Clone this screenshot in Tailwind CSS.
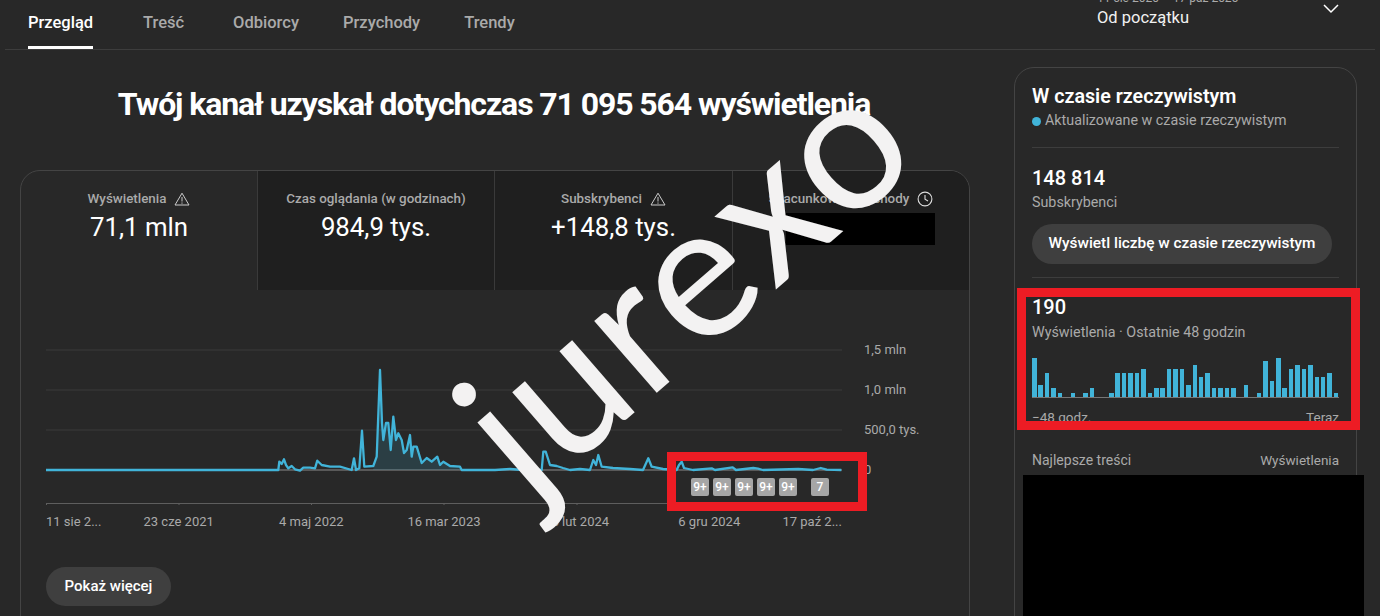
<!DOCTYPE html>
<html lang="pl">
<head>
  <meta charset="UTF-8" />
  <title>Przegląd kanału</title>
  <script src="https://cdn.jsdelivr.net/npm/@tailwindcss/browser@4"></script>
</head>
<body class="bg-[#282828] font-['Roboto',sans-serif] text-white overflow-hidden">
<div class="relative w-[1380px] h-[616px] overflow-hidden">

  <!-- Top tabs -->
  <header class="mx-[5px] h-[50px] border-b border-[#3d3d3d] flex items-end justify-between overflow-hidden">
    <nav class="flex pl-[23px] text-[16.500px] font-medium text-[#aaaaaa]">
      <a class="h-[49px] w-[65px] flex flex-col text-white"><span class="h-[46px] leading-[45px] whitespace-nowrap">Przegląd</span><span class="h-[3px] bg-white"></span></a>
      <a class="h-[49px] ml-[50px] leading-[45px]">Treść</a>
      <a class="h-[49px] ml-[49px] leading-[45px]">Odbiorcy</a>
      <a class="h-[49px] ml-[44px] leading-[45px]">Przychody</a>
      <a class="h-[49px] ml-[44px] leading-[45px]">Trendy</a>
    </nav>
    <div class="flex items-start w-[278px] h-[49px] relative">
      <div class="-mt-[10px]">
        <div class="text-[12px] leading-[16px] text-[#aaaaaa]">11 sie 2020 – 17 paź 2025</div>
        <div class="text-[16.500px] leading-[20px] mt-[2px] text-[#f1f1f1]">Od początku</div>
      </div>
      <svg class="absolute left-[226px] top-[3px] w-[16px] h-[12px]" viewBox="0 0 16 12" fill="none" stroke="#ffffff" stroke-width="1.5"><path d="M1 2l7 7 7-7" /></svg>
    </div>
  </header>

  <div class="flex">
    <!-- Left column -->
    <main class="w-[950px] ml-[20px] shrink-0">
      <h1 class="h-[120px] pt-[34px] pr-[2px] text-center text-[32px] leading-[40px] font-bold tracking-[-1.1px]">Twój kanał uzyskał dotychczas 71 095 564 wyświetlenia</h1>

      <section class="h-[500px] rounded-t-[20px] border border-[#444444] overflow-hidden">
        <!-- Metric tabs -->
        <div class="flex h-[119px]">
          <div class="w-[236px] pt-[20px] text-center">
            <div class="flex items-center justify-center gap-[8px] text-[13.400px] leading-[16px] font-medium text-[#aaaaaa]">Wyświetlenia
              <svg class="w-[16px] h-[14px]" viewBox="0 0 16 14" fill="none" stroke="#cccccc" stroke-width="1"><path d="M8 1.2L15 13H1z M8 5v4.5 M8 10.5v1.2" /></svg>
            </div>
            <div class="text-[25.800px] leading-[32px] mt-[4px]">71,1 mln</div>
          </div>
          <div class="w-[237px] pt-[20px] text-center bg-[#1f1f1f] border-l border-[#3a3a3a]">
            <div class="text-[13.400px] leading-[16px] font-medium text-[#aaaaaa]">Czas oglądania (w godzinach)</div>
            <div class="text-[25.800px] leading-[32px] mt-[4px]">984,9 tys.</div>
          </div>
          <div class="w-[238px] pt-[20px] text-center bg-[#1f1f1f] border-l border-[#3a3a3a]">
            <div class="flex items-center justify-center gap-[8px] text-[13.400px] leading-[16px] font-medium text-[#aaaaaa]">Subskrybenci
              <svg class="w-[16px] h-[14px]" viewBox="0 0 16 14" fill="none" stroke="#cccccc" stroke-width="1"><path d="M8 1.2L15 13H1z M8 5v4.5 M8 10.5v1.2" /></svg>
            </div>
            <div class="text-[25.800px] leading-[32px] mt-[4px]">+148,8 tys.</div>
          </div>
          <div class="flex-1 pt-[20px] bg-[#1f1f1f] border-l border-[#3a3a3a]">
            <div class="flex items-center justify-center gap-[8px] text-[13.400px] leading-[16px] font-medium text-[#aaaaaa]">Szacunkowe przychody
              <svg class="w-[16px] h-[16px]" viewBox="0 0 16 16" fill="none" stroke="#dddddd" stroke-width="1.1"><circle cx="8" cy="8" r="6.9" /><path d="M8 4v4.2l3 1.8" /></svg>
            </div>
            <div class="w-[149px] h-[32px] bg-black mt-[6px] ml-[53px]"></div>
          </div>
        </div>

        <!-- Chart -->
        <div class="relative pl-[25px] pt-[40px] h-[277px]">
          <div class="flex">
            <svg class="w-[796px] h-[175px] shrink-0" viewBox="46 330 796 175" fill="none">
              <path d="M46 350H842M46 390H842M46 430H842" stroke="#3a3a3a" />
              <path d="M46 470H842" stroke="#8a8a8a" />
              <path d="M46 503.5H842" stroke="#5e5e5e" />
              <path d="M46.500 503v4M179 503v4M311.500 503v4M444 503v4M577 503v4M709.500 503v4M841.500 503v4" stroke="#5e5e5e" />
              <path fill="#41b4d9" fill-opacity=".16" d="M376.700 456.700L380 370 382 423 383.300 440 386 423 388.300 423 390.700 450 393.300 416.700 396 440 398.300 433.300 401.700 440 404 453 406.700 450 410 435 411.700 456.700 413.300 446.700 416.700 446.700 421.700 463 426.700 458 431.700 461.700 437.300 456.700 440 465 443.300 461.700 450 466 460 466.700 461.700 470H373z" />
              <path stroke="#41b4d9" stroke-width="2.300" stroke-linejoin="round" d="M46 470H278.300L279.300 461.700 281.700 464 284 459.300 286 465 288.300 468.300 291.700 466 295 469.300 300 470.700 303.300 467.700 310 467.700 315 468.300 317.300 460.700 321.700 465 330 466.700 340 466.700 351.700 470 354 458.300 356 470 359.300 468.300 362 430.700 364.300 466.700 373.300 466 376.700 456.700 380 370 382 423 383.300 440 386 423 388.300 423 390.700 450 393.300 416.700 396 440 398.300 433.300 401.700 440 404 453 406.700 450 410 435 411.700 456.700 413.300 446.700 416.700 446.700 421.700 463 426.700 458 431.700 461.700 437.300 456.700 440 465 443.300 461.700 450 466 460 466.700 461.700 470H495L510 469 523 470H541.700L543.300 451.700 545.700 451.700 550 465 556.700 466 563 468 570 470 580 469 590 470 593.300 460 596 465 598.300 455 601.700 466.700 613 468 630 469 643 470 648.300 458.300 651.700 466.700 663 469 676.700 470 679 465 681.700 461.700 684 468 693 470 711.700 468.300 715 470 732.700 467.300 736 470 753.300 468 758 468.700 763 470 798.300 469 813 470 820.700 468 826.700 469.700 841.300 470" />
            </svg>
            <div class="ml-[22px] text-[13px] text-[#aaaaaa]">
              <div class="h-[40px] leading-[40px]">1,5 mln</div>
              <div class="h-[40px] leading-[40px]">1,0 mln</div>
              <div class="h-[40px] leading-[40px]">500,0 tys.</div>
              <div class="h-[40px] leading-[40px]">0</div>
            </div>
          </div>
          <div class="flex w-[796px] text-[13px] leading-[16px] text-[#aaaaaa] mt-[9px]">
            <span class="w-[66.330px]">11 sie 2...</span>
            <span class="w-[132.670px] text-center">23 cze 2021</span>
            <span class="w-[132.670px] text-center">4 maj 2022</span>
            <span class="w-[132.670px] text-center">16 mar 2023</span>
            <span class="w-[132.670px] text-center">25 lut 2024</span>
            <span class="w-[132.670px] text-center">6 gru 2024</span>
            <span class="w-[66.330px] text-right whitespace-nowrap">17 paź 2...</span>
          </div>
          <!-- Notes on the timeline -->
          <div class="absolute left-[670px] top-[188px] flex text-[12px] font-medium leading-[18px] text-center text-white">
            <span class="w-[18px] h-[18px] rounded-[2px] bg-[#a6a6a6]">9+</span>
            <span class="w-[18px] h-[18px] rounded-[2px] bg-[#a6a6a6] ml-[4px]">9+</span>
            <span class="w-[18px] h-[18px] rounded-[2px] bg-[#a6a6a6] ml-[4px]">9+</span>
            <span class="w-[18px] h-[18px] rounded-[2px] bg-[#a6a6a6] ml-[4px]">9+</span>
            <span class="w-[18px] h-[18px] rounded-[2px] bg-[#a6a6a6] ml-[4px]">9+</span>
            <span class="w-[18px] h-[18px] rounded-[2px] bg-[#a6a6a6] ml-[14px]">7</span>
          </div>
        </div>

        <button class="ml-[25px] h-[39px] w-[125px] rounded-full bg-[#3f3f3f] text-[15px] font-medium">Pokaż więcej</button>
      </section>
    </main>

    <!-- Realtime card -->
    <aside class="ml-[44px] mt-[17px] w-[343px] h-[600px] shrink-0 rounded-t-[20px] border border-[#444444] px-[17px] pt-[17px]">
      <h2 class="text-[19.700px] leading-[24px] font-semibold">W czasie rzeczywistym</h2>
      <div class="flex items-center h-[20px] mt-[2px] text-[14.300px] text-[#aaaaaa]"><span class="w-[9px] h-[9px] rounded-full bg-[#41b4d9] mr-[4px]"></span>Aktualizowane w czasie rzeczywistym</div>
      <div class="h-[17px] border-b border-[#3d3d3d]"></div>
      <div class="text-[20px] leading-[24px] font-medium mt-[18px]">148 814</div>
      <div class="text-[14.300px] leading-[20px] text-[#aaaaaa] mt-[2px]">Subskrybenci</div>
      <button class="mt-[12px] w-[300px] h-[40px] rounded-full bg-[#3f3f3f] text-[15.400px] font-medium">Wyświetl liczbę w czasie rzeczywistym</button>
      <div class="h-[14px] border-b border-[#3d3d3d]"></div>
      <div class="text-[20px] leading-[24px] font-medium mt-[17px]">190</div>
      <div class="text-[14.300px] leading-[20px] text-[#aaaaaa] mt-[3px]">Wyświetlenia · Ostatnie 48 godzin</div>
      <div class="flex items-end justify-between h-[40px] w-[307px] mt-[16px] border-b border-[#777777]">
        <i class="w-[4.500px] h-[39px] bg-[#41b4d9]"></i><i class="w-[4.500px] h-[12px] bg-[#41b4d9]"></i><i class="w-[4.500px] h-[24px] bg-[#41b4d9]"></i><i class="w-[4.500px] h-[9px] bg-[#41b4d9]"></i><i class="w-[4.500px] h-[4px] bg-[#41b4d9]"></i><i class="w-[4.500px] h-0"></i>
        <i class="w-[4.500px] h-[4px] bg-[#41b4d9]"></i><i class="w-[4.500px] h-0"></i><i class="w-[4.500px] h-[4px] bg-[#41b4d9]"></i><i class="w-[4.500px] h-[9px] bg-[#41b4d9]"></i><i class="w-[4.500px] h-0"></i><i class="w-[4.500px] h-0"></i>
        <i class="w-[4.500px] h-[4px] bg-[#41b4d9]"></i><i class="w-[4.500px] h-[24px] bg-[#41b4d9]"></i><i class="w-[4.500px] h-[24px] bg-[#41b4d9]"></i><i class="w-[4.500px] h-[24px] bg-[#41b4d9]"></i><i class="w-[4.500px] h-[24px] bg-[#41b4d9]"></i><i class="w-[4.500px] h-[28px] bg-[#41b4d9]"></i>
        <i class="w-[4.500px] h-[4px] bg-[#41b4d9]"></i><i class="w-[4.500px] h-[9px] bg-[#41b4d9]"></i><i class="w-[4.500px] h-[9px] bg-[#41b4d9]"></i><i class="w-[4.500px] h-[28px] bg-[#41b4d9]"></i><i class="w-[4.500px] h-[28px] bg-[#41b4d9]"></i><i class="w-[4.500px] h-[28px] bg-[#41b4d9]"></i>
        <i class="w-[4.500px] h-[12px] bg-[#41b4d9]"></i><i class="w-[4.500px] h-[32px] bg-[#41b4d9]"></i><i class="w-[4.500px] h-[20px] bg-[#41b4d9]"></i><i class="w-[4.500px] h-[24px] bg-[#41b4d9]"></i><i class="w-[4.500px] h-[9px] bg-[#41b4d9]"></i><i class="w-[4.500px] h-[9px] bg-[#41b4d9]"></i>
        <i class="w-[4.500px] h-[9px] bg-[#41b4d9]"></i><i class="w-[4.500px] h-[9px] bg-[#41b4d9]"></i><i class="w-[4.500px] h-0"></i><i class="w-[4.500px] h-[12px] bg-[#41b4d9]"></i><i class="w-[4.500px] h-0"></i><i class="w-[4.500px] h-[4px] bg-[#41b4d9]"></i>
        <i class="w-[4.500px] h-[36px] bg-[#41b4d9]"></i><i class="w-[4.500px] h-[16px] bg-[#41b4d9]"></i><i class="w-[4.500px] h-[39px] bg-[#41b4d9]"></i><i class="w-[4.500px] h-[9px] bg-[#41b4d9]"></i><i class="w-[4.500px] h-[28px] bg-[#41b4d9]"></i><i class="w-[4.500px] h-[32px] bg-[#41b4d9]"></i>
        <i class="w-[4.500px] h-[28px] bg-[#41b4d9]"></i><i class="w-[4.500px] h-[32px] bg-[#41b4d9]"></i><i class="w-[4.500px] h-[20px] bg-[#41b4d9]"></i><i class="w-[4.500px] h-[20px] bg-[#41b4d9]"></i><i class="w-[4.500px] h-[24px] bg-[#41b4d9]"></i><i class="w-[4.500px] h-[4px] bg-[#41b4d9]"></i>
      </div>
      <div class="flex justify-between w-[307px] mt-[11px] text-[13.500px] leading-[16px] text-[#aaaaaa]"><span>−48 godz.</span><span>Teraz</span></div>
      <div class="flex justify-between w-[307px] mt-[25px] leading-[20px] text-[#aaaaaa]"><span class="text-[14px]">Najlepsze treści</span><span class="text-[13.500px]">Wyświetlenia</span></div>
      <div class="w-[341px] h-[142px] bg-black mt-[5px] -ml-[9px]"></div>
    </aside>
  </div>

  <!-- Annotations drawn over the screenshot -->
  <div class="absolute left-[667px] top-[452px] w-[200px] h-[59px] border-[9px] border-[#ed1c24]"></div>
  <div class="absolute left-[1017px] top-[288px] w-[343px] h-[142px] border-[9px] border-[#ed1c24]"></div>
  <div class="absolute left-[410px] top-[182px] w-[540px] text-center text-[188px] leading-[188px] tracking-[3px] font-['Lato',sans-serif] text-[#f3f2f2] -rotate-[41deg] whitespace-nowrap">jurexo</div>
</div>
</body>
</html>
